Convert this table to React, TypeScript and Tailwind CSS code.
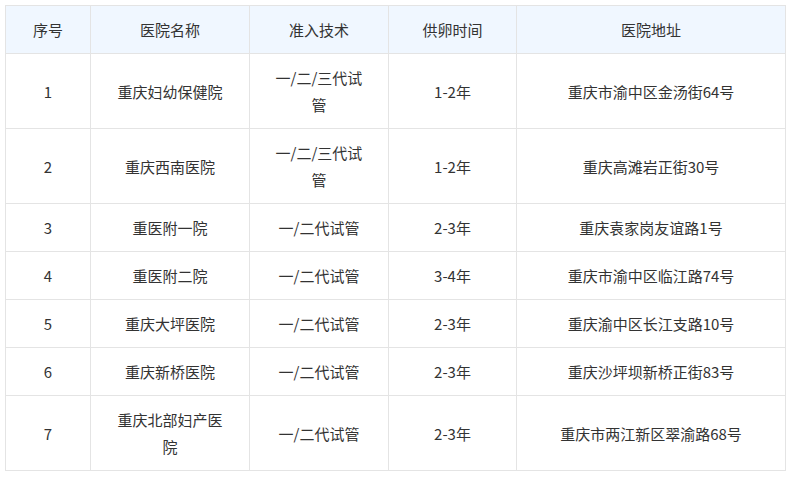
import React from 'react';

const rows = [
  { id: 1, name: '重庆妇幼保健院', tech: '一/二/三代试管', time: '1-2年', addr: '重庆市渝中区金汤街64号' },
  { id: 2, name: '重庆西南医院', tech: '一/二/三代试管', time: '1-2年', addr: '重庆高滩岩正街30号' },
  { id: 3, name: '重医附一院', tech: '一/二代试管', time: '2-3年', addr: '重庆袁家岗友谊路1号' },
  { id: 4, name: '重医附二院', tech: '一/二代试管', time: '3-4年', addr: '重庆市渝中区临江路74号' },
  { id: 5, name: '重庆大坪医院', tech: '一/二代试管', time: '2-3年', addr: '重庆渝中区长江支路10号' },
  { id: 6, name: '重庆新桥医院', tech: '一/二代试管', time: '2-3年', addr: '重庆沙坪坝新桥正街83号' },
  { id: 7, name: '重庆北部妇产医院', tech: '一/二代试管', time: '2-3年', addr: '重庆市两江新区翠渝路68号' },
];

const headers = ['序号', '医院名称', '准入技术', '供卵时间', '医院地址'];

const cell = 'border border-[#e4e4e4] px-[22px] py-[10px] text-center align-middle';

export default function App() {
  return (
    <div
      className="bg-white w-[793px] h-[478px] p-[5px] text-[15px] leading-[27px] text-[#333]"
      style={{ fontFamily: '"Microsoft YaHei", "Noto Sans CJK SC", sans-serif' }}
    >
      <table className="w-[780px] table-fixed border-collapse">
        <colgroup>
          <col className="w-[85px]" />
          <col className="w-[159px]" />
          <col className="w-[139px]" />
          <col className="w-[128px]" />
          <col className="w-[269px]" />
        </colgroup>
        <thead>
          <tr className="bg-[#f0f7ff]">
            {headers.map((h) => (
              <th key={h} className={`${cell} font-normal`}>
                {h}
              </th>
            ))}
          </tr>
        </thead>
        <tbody>
          {rows.map((r) => (
            <tr key={r.id}>
              <td className={cell}>{r.id}</td>
              <td className={cell}>{r.name}</td>
              <td className={cell}>{r.tech}</td>
              <td className={cell}>{r.time}</td>
              <td className={cell}>{r.addr}</td>
            </tr>
          ))}
        </tbody>
      </table>
    </div>
  );
}
